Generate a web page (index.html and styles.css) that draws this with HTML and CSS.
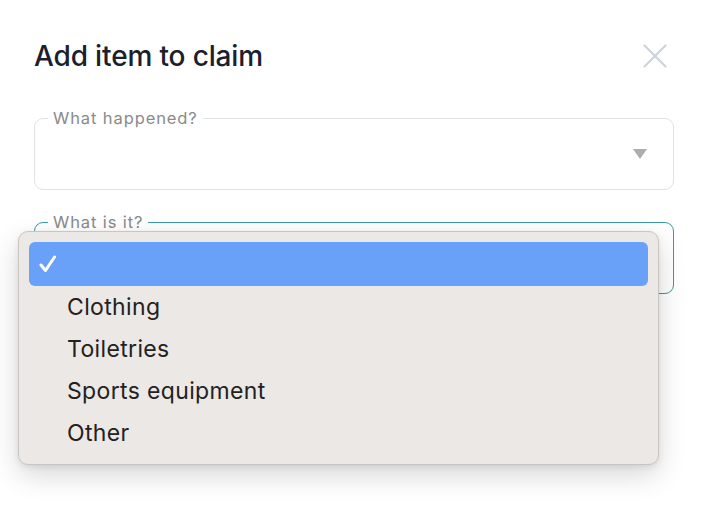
FILE: index.html
```html
<!DOCTYPE html>
<html>
<head>
<meta charset="utf-8">
<link rel="stylesheet" href="styles.css">
</head>
<body>
<div class="modal">
  <div class="header">
    <h1 class="title">Add item to claim</h1>
    <button class="close" aria-label="Close">
      <svg width="24" height="24" viewBox="0 0 24 24"><path d="M1.5 1.5L22.5 22.5M22.5 1.5L1.5 22.5" stroke="#cbd5e0" stroke-width="2.2" stroke-linecap="round"/></svg>
    </button>
  </div>
  <fieldset class="field">
    <legend class="legend">What happened?</legend>
    <div class="control">
      <span class="caret"></span>
    </div>
  </fieldset>
  <div class="select-wrap">
    <fieldset class="field focused">
      <legend class="legend">What is it?</legend>
      <div class="control"></div>
    </fieldset>
    <div class="menu">
      <div class="option selected"><svg class="check" width="18" height="18" viewBox="0 0 18 18"><path d="M2 10L6.5 15.5L15.5 2" fill="none" stroke="#fff" stroke-width="3" stroke-linecap="round" stroke-linejoin="round"/></svg></div>
      <div class="option">Clothing</div>
      <div class="option">Toiletries</div>
      <div class="option">Sports equipment</div>
      <div class="option">Other</div>
    </div>
  </div>
</div>
</body>
</html>
```
FILE: styles.css
```css
* { box-sizing: border-box; }
html, body { margin: 0; background: #fff; }
body {
  font-family: Inter, "Noto Sans", sans-serif;
  width: 710px;
  height: 510px;
  overflow: hidden;
}
.modal {
  padding: 36px 36px 0 34px;
}
.header {
  display: flex;
  justify-content: space-between;
  align-items: center;
  height: 40px;
}
.title {
  margin: 0;
  font-size: 28px;
  font-weight: 500;
  color: #1a202c;
  letter-spacing: -0.15px;
}
.close {
  border: 0;
  background: none;
  padding: 0;
  margin-right: 7px;
  width: 24px;
  height: 24px;
  display: flex;
}
.field {
  margin: 0;
  padding: 0 13px;
  border: 1px solid #e2e2e2;
  border-radius: 9px;
  height: 80px;
  min-width: 0;
}
.header + .field { margin-top: 34px; }
.legend {
  padding: 0 5px;
  margin-left: 0;
  font-size: 16.5px;
  color: #8a8a8a;
  line-height: 16px;
  letter-spacing: 0.9px;
}
.control {
  height: 63px;
  display: flex;
  align-items: center;
  justify-content: flex-end;
  padding-right: 13px;
  padding-bottom: 8px;
}
.caret {
  width: 0;
  height: 0;
  border-left: 7px solid transparent;
  border-right: 7px solid transparent;
  border-top: 10px solid #adadad;
}
.select-wrap {
  position: relative;
  margin-top: 24px;
}
.field.focused { border-color: #3a9ba0; }
.menu {
  position: absolute;
  left: -16px;
  top: 17px;
  width: 641px;
  padding: 10px 10px;
  background: #ece8e5;
  border: 1px solid #c9c5c2;
  border-radius: 10px;
  box-shadow: 0 10px 28px rgba(0,0,0,0.16), 0 2px 6px rgba(0,0,0,0.08);
}
.option {
  height: 42px;
  display: flex;
  align-items: center;
  padding-left: 38px;
  font-size: 23px;
  color: #222;
  letter-spacing: 0.35px;
}
.option.selected {
  height: 44px;
  background: #69a0f8;
  border-radius: 6px;
  padding-left: 10px;
}
.check { display: block; }
```
